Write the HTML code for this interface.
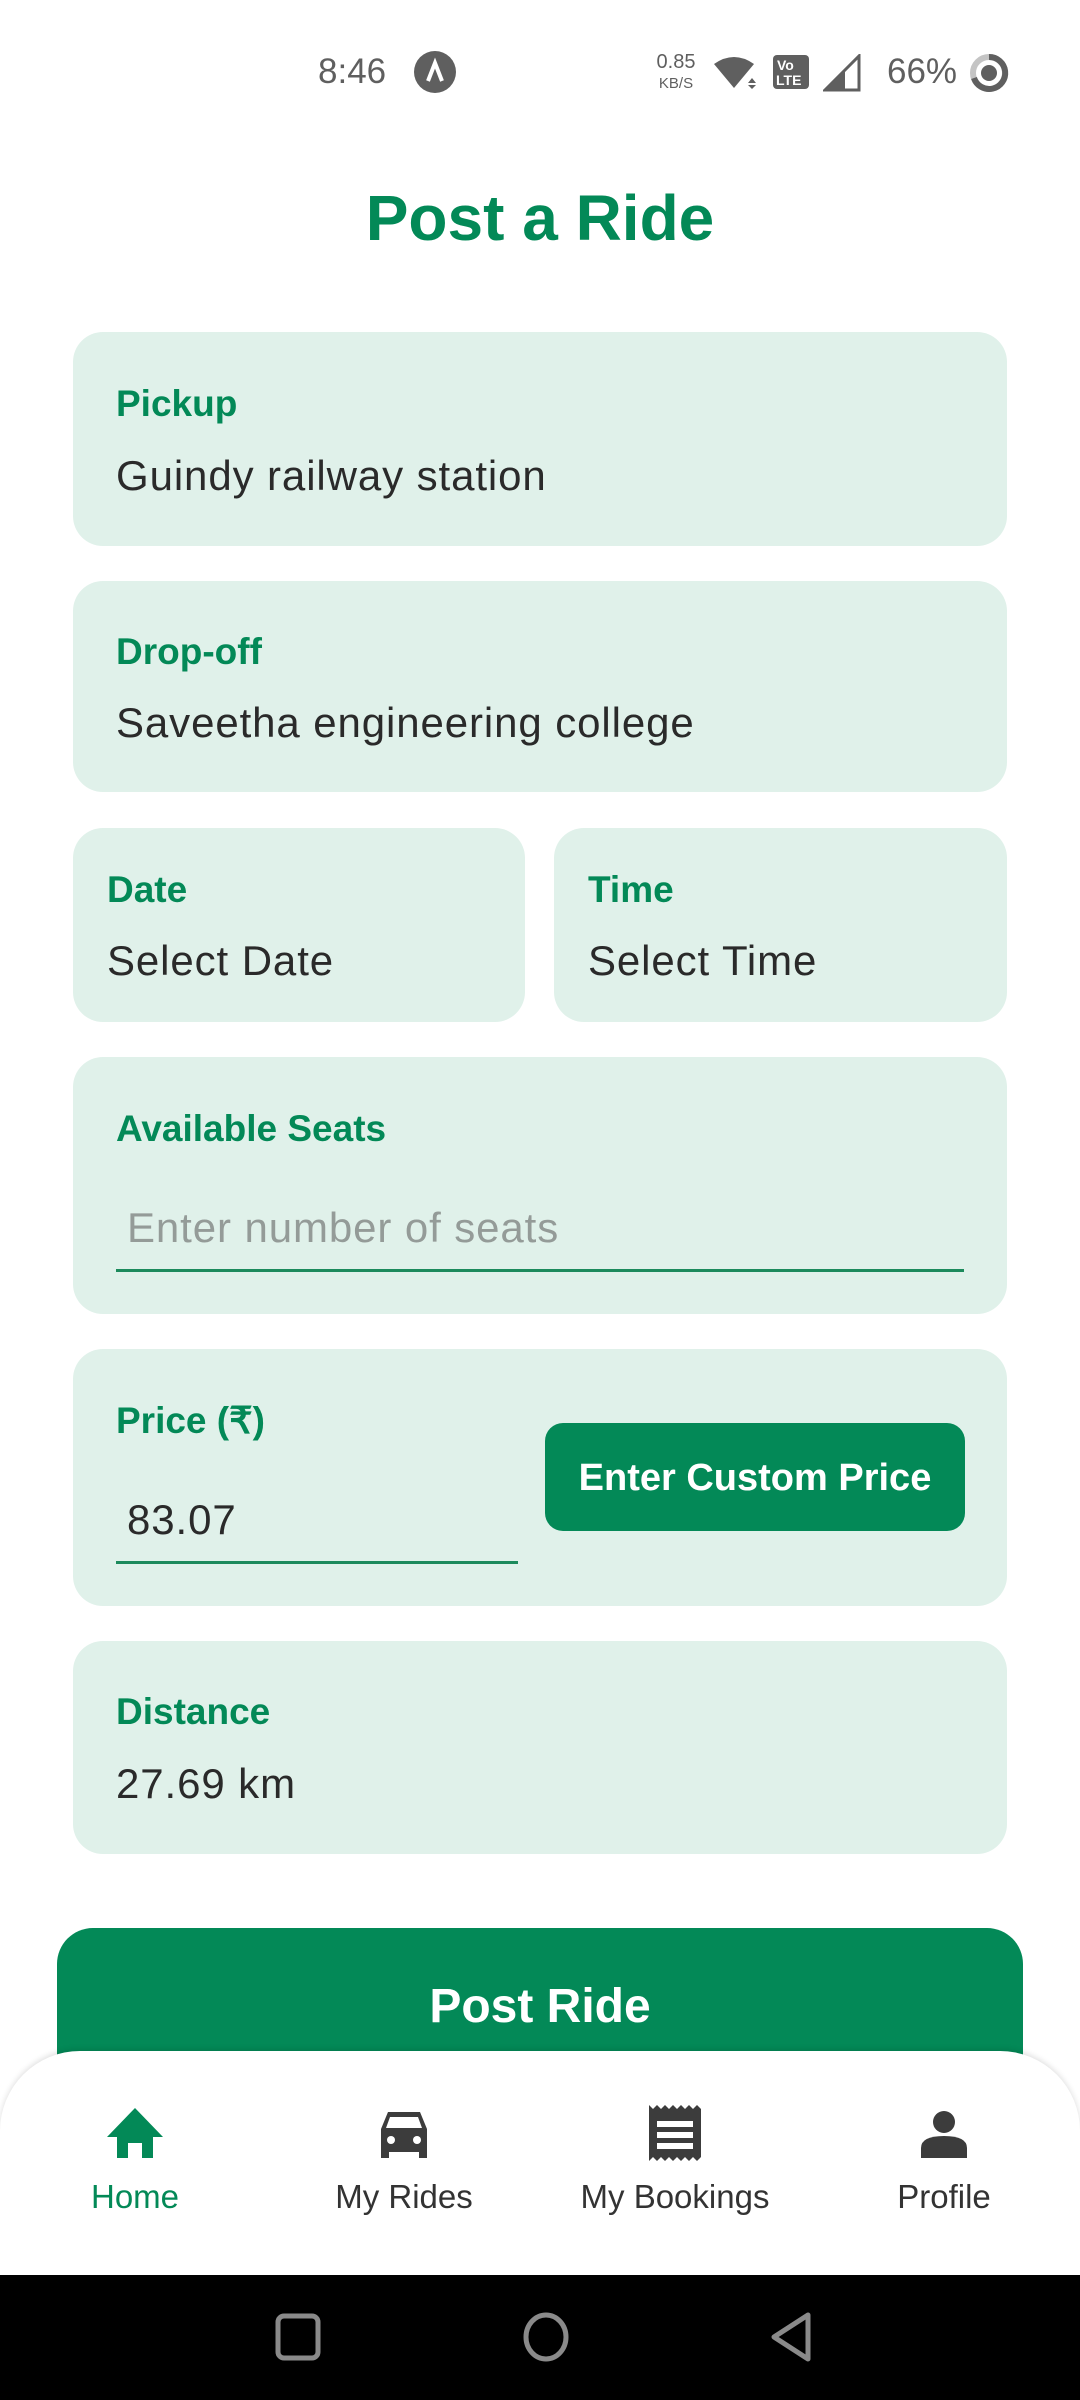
<!DOCTYPE html>
<html><head><meta charset="utf-8"><style>
*{margin:0;padding:0;box-sizing:border-box}
body{width:1080px;height:2400px;position:relative;background:#fff;font-family:"Liberation Sans",sans-serif;overflow:hidden}
.a{position:absolute;white-space:nowrap}
.card{position:absolute;background:#e0f1ea;border-radius:30px}
.lab{position:absolute;color:#038957;font-weight:bold;font-size:37px;line-height:50px}
.val{position:absolute;color:#2a2a2a;font-size:42px;line-height:56px;letter-spacing:0.9px}
.st{color:#5f5f5f}
.nl{position:absolute;font-size:33px;line-height:44px;color:#333;text-align:center;width:260px}
</style></head><body>
<div class="a st" style="left:318px;top:50px;font-size:35px;line-height:44px">8:46</div>
<svg class="a" style="left:413px;top:50px" width="44" height="44"><circle cx="22" cy="22" r="21" fill="#5f5f5f"/><path d="M15 31 L22 13 L29 31" stroke="#fff" stroke-width="4" fill="none"/></svg>
<div class="a st" style="left:652px;top:52px;font-size:20px;line-height:20px;text-align:center;width:48px">0.85<br><span style="font-size:15px">KB/S</span></div>
<svg class="a" style="left:712px;top:56px" width="48" height="34"><path d="M2 8 Q22 -6 42 8 L22 32 Z" fill="#5f5f5f"/><path d="M40 22 l4 5 h-8z M40 33 l4 -4 h-8z" fill="#5f5f5f"/></svg>
<svg class="a" style="left:772px;top:54px" width="38" height="36"><rect x="1" y="1" width="36" height="34" rx="4" fill="#5f5f5f"/><text x="5" y="16" font-size="14" font-weight="bold" fill="#fff" font-family="Liberation Sans">Vo</text><text x="4" y="31" font-size="14" font-weight="bold" fill="#fff" font-family="Liberation Sans">LTE</text></svg>
<svg class="a" style="left:823px;top:54px" width="40" height="38"><path d="M2 36 L36 2 V36 Z" fill="none" stroke="#5f5f5f" stroke-width="3"/><path d="M2 36 L22 16 V36 Z" fill="#5f5f5f"/></svg>
<div class="a st" style="left:887px;top:50px;font-size:35px;line-height:44px">66%</div>
<svg class="a" style="left:968px;top:52px" width="42" height="42"><circle cx="21" cy="21" r="16" fill="none" stroke="#c4c4c4" stroke-width="6"/><path d="M21 5 A16 16 0 1 1 6 26" fill="none" stroke="#5f5f5f" stroke-width="6"/><circle cx="21" cy="21" r="8" fill="#5f5f5f"/></svg>

<div class="a" style="left:0;width:1080px;top:180px;text-align:center;color:#038957;font-weight:bold;font-size:64px;line-height:76px">Post a Ride</div>

<div class="card" style="left:73px;top:332px;width:934px;height:214px"></div>
<div class="lab" style="left:116px;top:379px">Pickup</div>
<div class="val" style="left:116px;top:448px">Guindy railway station</div>

<div class="card" style="left:73px;top:581px;width:934px;height:211px"></div>
<div class="lab" style="left:116px;top:627px">Drop-off</div>
<div class="val" style="left:116px;top:695px">Saveetha engineering college</div>

<div class="card" style="left:73px;top:828px;width:452px;height:194px"></div>
<div class="card" style="left:554px;top:828px;width:453px;height:194px"></div>
<div class="lab" style="left:107px;top:865px">Date</div>
<div class="val" style="left:107px;top:933px">Select Date</div>
<div class="lab" style="left:588px;top:865px">Time</div>
<div class="val" style="left:588px;top:933px">Select Time</div>

<div class="card" style="left:73px;top:1057px;width:934px;height:257px"></div>
<div class="lab" style="left:116px;top:1104px">Available Seats</div>
<div class="val" style="left:127px;top:1200px;color:#949b98">Enter number of seats</div>
<div class="a" style="left:116px;top:1269px;width:848px;height:3px;background:#1c8a5c"></div>

<div class="card" style="left:73px;top:1349px;width:934px;height:257px"></div>
<div class="lab" style="left:116px;top:1396px">Price (₹)</div>
<div class="val" style="left:127px;top:1492px">83.07</div>
<div class="a" style="left:116px;top:1561px;width:402px;height:3px;background:#1c8a5c"></div>
<div class="a" style="left:545px;top:1423px;width:420px;height:108px;background:#038957;border-radius:18px;color:#fff;font-weight:bold;font-size:38px;line-height:110px;text-align:center">Enter Custom Price</div>

<div class="card" style="left:73px;top:1641px;width:934px;height:213px"></div>
<div class="lab" style="left:116px;top:1687px">Distance</div>
<div class="val" style="left:116px;top:1756px">27.69 km</div>

<div class="a" style="left:57px;top:1928px;width:966px;height:180px;background:#038957;border-radius:36px"></div>
<div class="a" style="left:57px;width:966px;top:1977px;text-align:center;color:#fff;font-weight:bold;font-size:48px;line-height:60px">Post Ride</div>

<div class="a" style="left:0;top:2051px;width:1080px;height:240px;background:#fff;border-radius:80px 80px 0 0;box-shadow:0 -2px 6px rgba(0,0,0,0.12)"></div>
<svg class="a" style="left:106px;top:2108px" width="58" height="50"><path d="M29 0 L57 29 H47 V50 H36 V35 H22 V50 H11 V29 H1 Z" fill="#038957"/></svg>
<svg class="a" style="left:378px;top:2112px" width="52" height="46"><path d="M10 0 H42 L49 17 V46 H41 V40 H11 V46 H3 V17 Z" fill="#3c3c3c"/><path d="M12 5 H40 L44 16 H8 Z" fill="#fff"/><circle cx="13" cy="28" r="4" fill="#fff"/><circle cx="39" cy="28" r="4" fill="#fff"/></svg>
<svg class="a" style="left:648px;top:2105px" width="54" height="56"><path d="M1 0 L5 4 9 0 13 4 17 0 21 4 25 0 29 4 33 0 37 4 41 0 45 4 49 0 53 4 V52 L49 56 45 52 41 56 37 52 33 56 29 52 25 56 21 52 17 56 13 52 9 56 5 52 1 56 Z" fill="#3c3c3c"/><rect x="9" y="16" width="36" height="6" fill="#fff"/><rect x="9" y="27" width="36" height="6" fill="#fff"/><rect x="9" y="38" width="36" height="6" fill="#fff"/></svg>
<svg class="a" style="left:920px;top:2110px" width="48" height="48"><circle cx="24" cy="12" r="11" fill="#3c3c3c"/><path d="M1 48 V38 Q1 26 24 26 Q47 26 47 38 V48 Z" fill="#3c3c3c"/></svg>
<div class="nl" style="left:5px;top:2175px;color:#038957">Home</div>
<div class="nl" style="left:274px;top:2175px">My Rides</div>
<div class="nl" style="left:545px;top:2175px">My Bookings</div>
<div class="nl" style="left:814px;top:2175px">Profile</div>

<div class="a" style="left:0;top:2275px;width:1080px;height:125px;background:#000"></div>
<svg class="a" style="left:274px;top:2312px" width="48" height="50"><rect x="4" y="4" width="40" height="42" rx="6" fill="none" stroke="#8a8a8a" stroke-width="5"/></svg>
<svg class="a" style="left:522px;top:2311px" width="48" height="52"><ellipse cx="24" cy="26" rx="20" ry="22" fill="none" stroke="#8a8a8a" stroke-width="5"/></svg>
<svg class="a" style="left:768px;top:2311px" width="48" height="52"><path d="M40 4 V48 L6 26 Z" fill="none" stroke="#8a8a8a" stroke-width="5" stroke-linejoin="round"/></svg>
</body></html>
